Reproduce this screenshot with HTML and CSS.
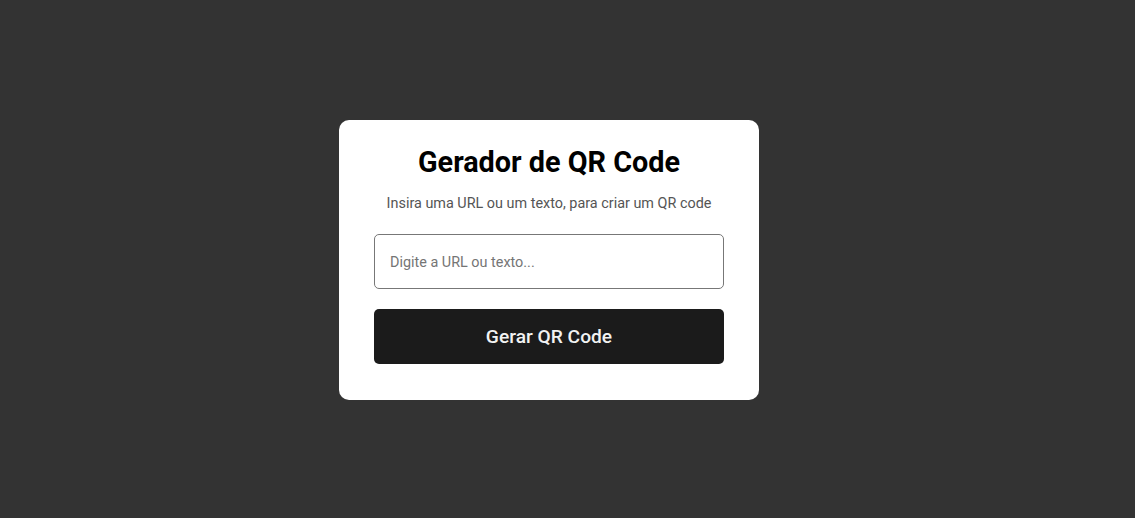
FILE: index.html
```html
<!DOCTYPE html>
<html lang="pt-BR">
<head>
<meta charset="utf-8">
<title>Gerador de QR Code</title>
<link rel="stylesheet" href="styles.css">
</head>
<body>
<main class="page">
  <section class="card">
    <h1 class="title">Gerador de QR Code</h1>
    <p class="subtitle">Insira uma URL ou um texto, para criar um QR code</p>
    <input class="field" type="text" placeholder="Digite a URL ou texto...">
    <button class="btn" type="button">Gerar QR Code</button>
  </section>
</main>
</body>
</html>
```
FILE: styles.css
```css
* { box-sizing: border-box; }
html, body { margin: 0; height: 100%; }
body {
  background: #333333;
  font-family: Roboto, "Noto Sans", sans-serif;
}
.page {
  height: 100%;
  display: flex;
  align-items: center;
  justify-content: center;
  padding: 2px 37px 0 0;
}
.card {
  width: 420px;
  height: 280px;
  background: #ffffff;
  border-radius: 10px;
  padding: 25px 35px 36px;
  display: flex;
  flex-direction: column;
  align-items: center;
}
.title {
  margin: 0 0 16px;
  font-size: 28.8px;
  font-weight: 700;
  color: #000;
  line-height: 34px;
}
.subtitle {
  margin: 0 0 22px;
  font-size: 14.4px;
  color: #555;
  line-height: 17px;
}
.field {
  width: 100%;
  height: 55px;
  flex: none;
  border: 1px solid #777;
  border-radius: 5px;
  padding: 1px 15px 0;
  font-family: Roboto, sans-serif;
  font-size: 14.4px;
  color: #222;
  outline: none;
}
.field::placeholder { color: #757575; }
.btn {
  margin-top: 20px;
  width: 100%;
  height: 55px;
  flex: none;
  border: none;
  border-radius: 5px;
  background: #1b1b1b;
  color: #f2f2f2;
  font-family: Roboto, sans-serif;
  font-size: 19.2px;
  font-weight: 500;
  cursor: pointer;
}
```
